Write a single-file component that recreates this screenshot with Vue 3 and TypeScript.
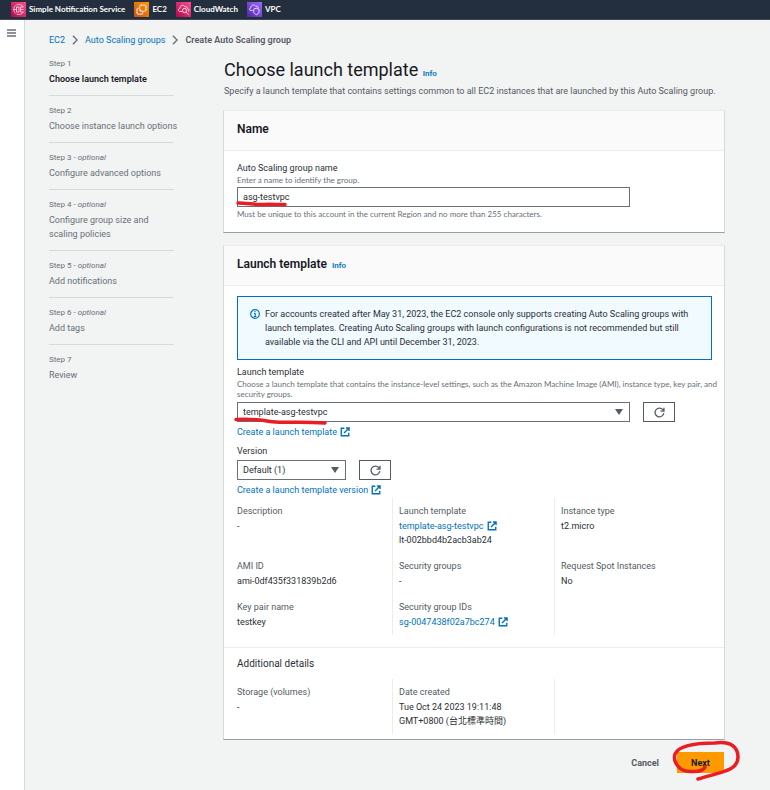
<script setup lang="ts">
import { ref } from 'vue'

interface Step {
  title: string
  optional?: boolean
}

interface Detail {
  label: string
  lines: string[]
  link?: boolean
}

const steps: Step[] = [
  { title: 'Choose launch template' },
  { title: 'Choose instance launch options' },
  { title: 'Configure advanced options', optional: true },
  { title: 'Configure group size and scaling policies', optional: true },
  { title: 'Add notifications', optional: true },
  { title: 'Add tags', optional: true },
  { title: 'Review' },
]

const details: Detail[] = [
  { label: 'Description', lines: ['-'] },
  { label: 'Launch template', lines: ['template-asg-testvpc', 'lt-002bbd4b2acb3ab24'], link: true },
  { label: 'Instance type', lines: ['t2.micro'] },
  { label: 'AMI ID', lines: ['ami-0df435f331839b2d6'] },
  { label: 'Security groups', lines: ['-'] },
  { label: 'Request Spot Instances', lines: ['No'] },
  { label: 'Key pair name', lines: ['testkey'] },
  { label: 'Security group IDs', lines: ['sg-0047438f02a7bc274'], link: true },
  { label: '', lines: [] },
]

const extraDetails: Detail[] = [
  { label: 'Storage (volumes)', lines: ['-'] },
  { label: 'Date created', lines: ['Tue Oct 24 2023 19:11:48', 'GMT+0800 (台北標準時間)'] },
  { label: '', lines: [] },
]

const groupName = ref('asg-testvpc')
const template = ref('template-asg-testvpc')
const version = ref('Default (1)')
const currentStep = ref(0)
</script>

<template>
  <div class="page">
    <svg class="defs" aria-hidden="true">
      <symbol id="external" viewBox="0 0 16 16">
        <path d="M7 2H2v12h12V9M9.500 1.500h5v5M14 2L6.500 9.500" fill="none" stroke="currentColor" stroke-width="2.200" />
      </symbol>
      <symbol id="refresh" viewBox="0 0 16 16">
        <path d="M14.300 9A6.400 6.400 0 1 1 12.600 3.500L14.300 5.500M14.500 1v5H9.500" fill="none" stroke="currentColor" stroke-width="1.900" />
      </symbol>
      <symbol id="chevron" viewBox="0 0 8 12">
        <path d="M1.500 1L6.500 6 1.500 11" fill="none" stroke="currentColor" stroke-width="1.600" />
      </symbol>
    </svg>

    <nav class="topbar" aria-label="Favorite services">
      <a href="#" class="service">
        <svg class="service-icon" viewBox="0 0 15 15">
          <defs>
            <linearGradient id="pink" x1="0" y1="1" x2="1" y2="0">
              <stop offset="0" stop-color="#b0084d" />
              <stop offset="1" stop-color="#ff4f8b" />
            </linearGradient>
            <linearGradient id="orange" x1="0" y1="1" x2="1" y2="0">
              <stop offset="0" stop-color="#c8511b" />
              <stop offset="1" stop-color="#ff9900" />
            </linearGradient>
            <linearGradient id="violet" x1="0" y1="1" x2="1" y2="0">
              <stop offset="0" stop-color="#4d27aa" />
              <stop offset="1" stop-color="#a166ff" />
            </linearGradient>
          </defs>
          <rect width="15" height="15" fill="url(#pink)" />
          <g fill="none" stroke="#fff" stroke-width="0.700">
            <path d="M4.500 3.500C3.300 4.500 2.800 6 2.800 7.500S3.300 10.500 4.500 11.500M5.500 3C8 1.800 11 2.800 12.300 5M5.500 12C8 13.200 11 12.200 12.300 10" />
            <path d="M2.300 7.500H5.500M5.500 5v5M5.500 5h2.500v5H5.500M9.500 5h3M9.500 7.500h3M9.500 10h3M9.500 5v5" />
          </g>
        </svg>
        <span>Simple Notification Service</span>
      </a>
      <a href="#" class="service">
        <svg class="service-icon" viewBox="0 0 15 15">
          <rect width="15" height="15" fill="url(#orange)" />
          <g fill="none" stroke="#fff" stroke-width="0.700">
            <rect x="5.800" y="3.200" width="6" height="6" rx="0.500" />
            <path d="M5.800 6.300H3.200V12h5.600V9.200M7.500 2v1.200M10 2v1.200M11.800 5H13M11.800 7.500H13M5.800 8H7v1.200M4.500 12v1M7 12v1M3.200 8H2M3.200 10.500H2" />
          </g>
        </svg>
        <span>EC2</span>
      </a>
      <a href="#" class="service">
        <svg class="service-icon" viewBox="0 0 15 15">
          <rect width="15" height="15" fill="url(#pink)" />
          <g fill="none" stroke="#fff" stroke-width="0.800">
            <path d="M6 9.500H4C2 9.500 1.700 6.800 4 6.300 3.800 3 7.800 2.300 9 4.800c1.300-.5 2.300.3 2.300 1.500" />
            <circle cx="8.500" cy="8.500" r="2.100" />
            <path d="M10 10l2.600 2.800M11.200 6.500c1.700 0 2.200 2 1.300 3" />
          </g>
        </svg>
        <span>CloudWatch</span>
      </a>
      <a href="#" class="service">
        <svg class="service-icon" viewBox="0 0 15 15">
          <rect width="15" height="15" fill="url(#violet)" />
          <g fill="none" stroke="#fff" stroke-width="0.800">
            <path d="M5.500 8.500H4C2 8.500 2 6.300 3.800 5.800 3.800 2.500 7.500 2.200 8.700 4.300c1.500-.5 2.500.3 2.500 1.500" />
            <path d="M9.300 6.200l2.700 1v3c0 1-1.500 2-2.700 2.600-1.200-.6-2.600-1.600-2.600-2.600v-3z" />
          </g>
        </svg>
        <span>VPC</span>
      </a>
    </nav>

    <div class="shell">
      <aside class="rail">
        <button type="button" class="menu" aria-label="Open navigation">
          <svg viewBox="0 0 9 8" width="9" height="8">
            <path d="M0 1h9M0 4h9M0 7h9" stroke="#687078" stroke-width="1.400" />
          </svg>
        </button>
      </aside>

      <div class="content">
        <nav class="breadcrumb" aria-label="Breadcrumb">
          <a href="#">EC2</a>
          <svg class="chevron"><use href="#chevron" /></svg>
          <a href="#">Auto Scaling groups</a>
          <svg class="chevron"><use href="#chevron" /></svg>
          <span class="here">Create Auto Scaling group</span>
        </nav>

        <div class="wizard">
          <ol class="steps">
            <li v-for="(step, i) in steps" :key="step.title" class="step" :class="{ active: i === currentStep }">
              <div class="step-no">Step {{ i + 1 }}<template v-if="step.optional"> - <em>optional</em></template></div>
              <div class="step-title">{{ step.title }}</div>
            </li>
          </ol>

          <main class="main">
            <header class="intro">
              <h1>Choose launch template <a href="#" class="info">Info</a></h1>
              <p>Specify a launch template that contains settings common to all EC2 instances that are launched by this Auto Scaling group.</p>
            </header>

            <section class="card">
              <h2 class="card-head">Name</h2>
              <div class="card-body name-body">
                <label for="group-name">Auto Scaling group name</label>
                <p class="hint">Enter a name to identify the group.</p>
                <div class="field-row wide">
                  <div class="control">
                    <input id="group-name" v-model="groupName" type="text" />
                    <svg class="mark mark-name" viewBox="0 0 52 6"><path d="M2 2C12 2 18 4 28 3.500S42 4 49 3.500" /></svg>
                  </div>
                </div>
                <p class="hint">Must be unique to this account in the current Region and no more than 255 characters.</p>
              </div>
            </section>

            <section class="card">
              <h2 class="card-head">Launch template <a href="#" class="info">Info</a></h2>
              <div class="card-body">
                <div class="alert" role="note">
                  <svg class="alert-icon" viewBox="0 0 10 10">
                    <circle cx="5" cy="5" r="4.300" fill="none" stroke="#0073bb" stroke-width="1.200" />
                    <path d="M5 2v1.300M4 4.500h1.200V7.500M3.800 7.500h2.600" fill="none" stroke="#0073bb" stroke-width="1.100" />
                  </svg>
                  <p>For accounts created after May 31, 2023, the EC2 console only supports creating Auto Scaling groups with launch templates. Creating Auto Scaling groups with launch configurations is not recommended but still available via the CLI and API until December 31, 2023.</p>
                </div>

                <div class="group">
                  <label for="template">Launch template</label>
                  <p class="hint">Choose a launch template that contains the instance-level settings, such as the Amazon Machine Image (AMI), instance type, key pair, and security groups.</p>
                  <div class="field-row">
                    <div class="control">
                      <select id="template" v-model="template">
                        <option>template-asg-testvpc</option>
                      </select>
                      <svg class="caret" viewBox="0 0 8 6"><path d="M0 0h8L4 6z" /></svg>
                      <svg class="mark mark-template" viewBox="0 0 94 8"><path d="M2 2.500C16 2 26 2.500 36 4.500S62 4 91 6" /></svg>
                    </div>
                    <button type="button" class="refresh" aria-label="Refresh templates"><svg><use href="#refresh" /></svg></button>
                  </div>
                  <a href="#" class="ext">Create a launch template <svg><use href="#external" /></svg></a>
                </div>

                <div class="group">
                  <label for="version">Version</label>
                  <div class="field-row">
                    <div class="control short">
                      <select id="version" v-model="version">
                        <option>Default (1)</option>
                      </select>
                      <svg class="caret" viewBox="0 0 8 6"><path d="M0 0h8L4 6z" /></svg>
                    </div>
                    <button type="button" class="refresh" aria-label="Refresh versions"><svg><use href="#refresh" /></svg></button>
                  </div>
                  <a href="#" class="ext">Create a launch template version <svg><use href="#external" /></svg></a>
                </div>

                <dl class="details">
                  <div v-for="(d, i) in details" :key="i" class="detail">
                    <dt>{{ d.label }}</dt>
                    <dd v-for="(line, n) in d.lines" :key="line">
                      <a v-if="d.link && n === 0" href="#" class="ext">{{ line }} <svg><use href="#external" /></svg></a>
                      <template v-else>{{ line }}</template>
                    </dd>
                  </div>
                </dl>
              </div>

              <div class="extra">
                <h3>Additional details</h3>
                <dl class="details">
                  <div v-for="(d, i) in extraDetails" :key="i" class="detail">
                    <dt>{{ d.label }}</dt>
                    <dd v-for="line in d.lines" :key="line">{{ line }}</dd>
                  </div>
                </dl>
              </div>
            </section>

            <footer class="actions">
              <button type="button" class="cancel">Cancel</button>
              <div class="next-wrap">
                <button type="button" class="next">Next</button>
                <svg class="mark mark-next" viewBox="0 0 72 42">
                  <path d="M34 27C32 32 22 32 15 31 6 29 2 20 4 14 8 5 26 3 44 3 60 1 67 7 67 17 67 31 50 32 27 39" />
                </svg>
              </div>
            </footer>
          </main>
        </div>
      </div>
    </div>
  </div>
</template>

<style>
body {
  margin: 0;
  background: #f2f3f3;
}
</style>

<style scoped>
.page {
  min-height: 100vh;
  display: flex;
  flex-direction: column;
  font-family: Roboto, "Noto Sans CJK TC", sans-serif;
  font-size: 9px;
  line-height: 14px;
  color: #2b2f36;
}
.page * {
  box-sizing: border-box;
}
.defs {
  position: absolute;
  width: 0;
  height: 0;
}
a {
  color: #0073bb;
  text-decoration: none;
}
h1,
h2,
h3,
p,
dl,
dd,
ol {
  margin: 0;
  padding: 0;
}
button,
input,
select {
  font: inherit;
  color: inherit;
  border-radius: 0;
  margin: 0;
}

.topbar {
  display: flex;
  align-items: center;
  gap: 9px;
  height: 20px;
  padding: 0 11px 1px;
  background: #232f3e;
  border-bottom: 1px solid #414750;
}
.service {
  display: flex;
  align-items: center;
  gap: 3px;
  color: #fff;
  font-family: Lato, sans-serif;
  font-size: 8px;
  font-weight: 700;
}
.service-icon {
  width: 15px;
  height: 15px;
}

.shell {
  flex: 1;
  display: flex;
}
.rail {
  width: 25px;
  background: #fff;
  border-right: 1px solid #d5dbdb;
}
.menu {
  display: block;
  padding: 9px 7px;
  border: 0;
  background: none;
}
.menu svg {
  display: block;
}
.content {
  flex: 1;
  min-width: 0;
  padding: 13px 45px 16px 24px;
}
.breadcrumb {
  display: flex;
  align-items: center;
  gap: 6px;
}
.chevron {
  width: 8px;
  height: 10px;
  color: #687078;
}
.here {
  color: #545b64;
  font-weight: 600;
}

.wizard {
  display: flex;
  gap: 49px;
}
.steps {
  width: 125px;
  padding-top: 2px;
  list-style: none;
  color: #687078;
}
.step {
  display: flex;
  flex-direction: column;
  gap: 1px;
  padding: 8px 0 9px;
  border-bottom: 1px solid #d5dbdb;
}
.step:last-child {
  border-bottom: 0;
}
.step-no {
  font-size: 8px;
}
.step-title {
  margin-right: -4px;
}
.active .step-title {
  color: #16191f;
  font-weight: 600;
}

.main {
  flex: 1;
  min-width: 0;
}
.intro {
  padding: 10px 0 11px 1px;
  color: #545b64;
}
h1 {
  color: #16191f;
  font-size: 18px;
  line-height: 26px;
  font-weight: 400;
}
.intro p {
  line-height: 16px;
}
.info {
  font-size: 8px;
  line-height: 8px;
  font-weight: 600;
}

.card {
  margin-bottom: 12px;
  background: #fff;
  border: 1px solid #d5dbdb;
  border-top-color: #eaeded;
  border-bottom-color: #97a0a6;
}
.card-head {
  padding: 10px 13px 13px;
  background: #fafafa;
  border-bottom: 1px solid #eaeded;
  color: #16191f;
  font-size: 12px;
  line-height: 16px;
  font-weight: 600;
}
.card-head .info {
  margin-left: 2px;
}
.card-body {
  padding: 10px 12px 12px 13px;
}
.name-body {
  padding-bottom: 13px;
}
label {
  display: block;
}
.hint {
  color: #687078;
  font-family: Lato, sans-serif;
  font-size: 8px;
  line-height: 10px;
}
.field-row {
  display: flex;
  gap: 13px;
  padding-right: 37px;
}
.field-row.wide {
  padding-right: 82px;
}
.name-body .field-row {
  margin: 2px 0;
}
.control {
  position: relative;
  flex: 1;
}
.control.short {
  flex: 0 0 109px;
}
input,
select {
  display: block;
  width: 100%;
  height: 20px;
  padding: 0 5px;
  border: 1px solid #687078;
  background: #fff;
  appearance: none;
}
.caret {
  position: absolute;
  right: 7px;
  top: 7px;
  width: 8px;
  height: 6px;
  fill: #545b64;
  pointer-events: none;
}
.refresh {
  display: flex;
  align-items: center;
  justify-content: center;
  width: 32px;
  height: 20px;
  padding: 0;
  border: 1px solid #545b64;
  background: #fff;
  color: #545b64;
}
.refresh svg {
  width: 11px;
  height: 11px;
}

.alert {
  display: flex;
  gap: 5px;
  padding: 10px 20px 10px 12px;
  margin-bottom: 5px;
  border: 1px solid #0073bb;
  background: #f1faff;
}
.alert-icon {
  flex: none;
  width: 10px;
  height: 10px;
  margin-top: 2px;
}
.group + .group {
  margin-top: 4px;
}
.group .ext {
  display: block;
  padding-top: 2px;
  line-height: 16px;
}
.group .hint {
  margin: 0 -10px 3px 0;
}
.group label + .field-row {
  margin-top: 2px;
}
.ext svg {
  width: 10px;
  height: 10px;
  margin-left: 1px;
  vertical-align: -2px;
}

.details {
  display: grid;
  grid-template-columns: 155fr 162fr 158fr;
}
.detail {
  padding: 6px 0 6px 6px;
  border-left: 1px solid #eaeded;
}
.detail:nth-child(3n + 1) {
  padding-left: 0;
  border-left: 0;
}
dt {
  color: #545b64;
  margin-bottom: 1px;
}
.extra {
  padding: 8px 12px 5px 13px;
  border-top: 1px solid #eaeded;
}
h3 {
  margin-bottom: 7px;
  font-size: 10px;
  line-height: 16px;
  font-weight: 400;
}

.actions {
  display: flex;
  justify-content: flex-end;
  align-items: center;
  gap: 18px;
  padding-right: 1px;
}
.cancel,
.next {
  padding: 0;
  border: 0;
  background: none;
  color: #545b64;
  font-weight: 700;
}
.next-wrap {
  position: relative;
}
.next {
  display: block;
  width: 47px;
  height: 21px;
  background: #ff9900;
  color: #16191f;
}

.mark {
  position: absolute;
  fill: none;
  stroke: #ea1c24;
  stroke-width: 3.500;
  stroke-linecap: round;
  stroke-linejoin: round;
  pointer-events: none;
}
.mark-name {
  left: -1px;
  top: 14px;
  width: 52px;
  height: 6px;
}
.mark-template {
  left: -3px;
  top: 15px;
  width: 94px;
  height: 8px;
}
.mark-next {
  left: -6px;
  top: -12px;
  width: 72px;
  height: 42px;
}
</style>
